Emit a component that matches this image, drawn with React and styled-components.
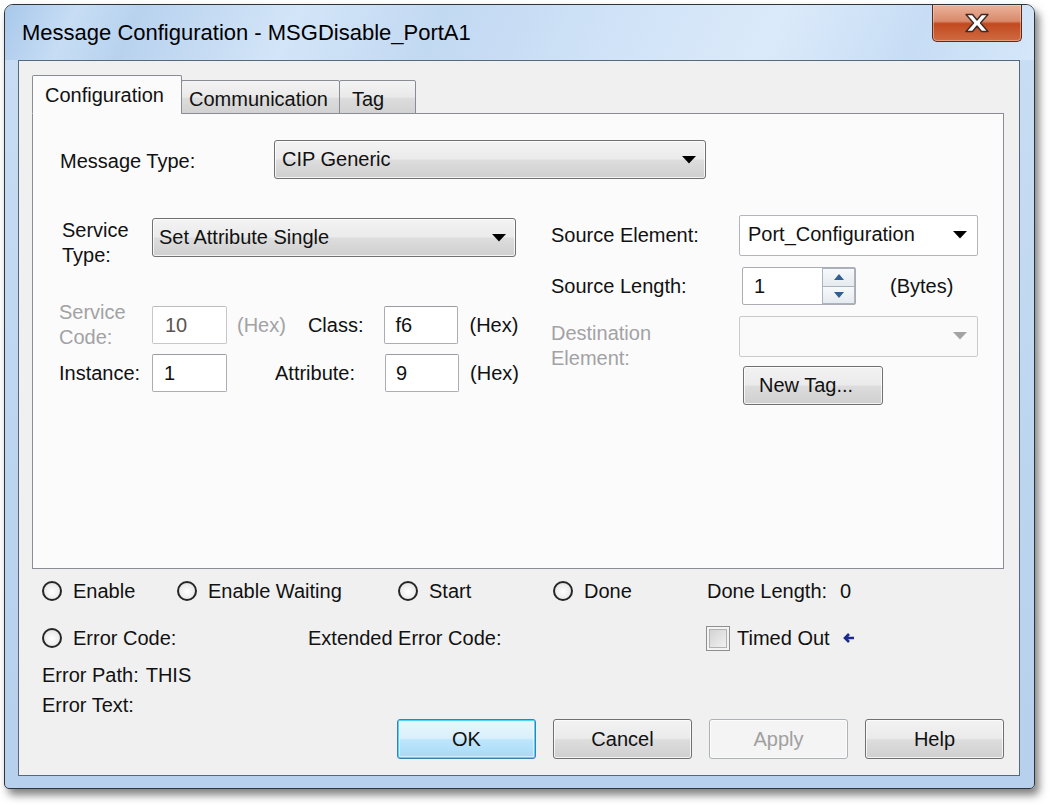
import React from "react";
import styled, { createGlobalStyle } from "styled-components";

const GlobalStyle = createGlobalStyle`
  html, body { margin: 0; padding: 0; background: #fff; }
  body {
    font-family: "Liberation Sans", Arial, sans-serif;
    font-size: 20px;
    color: #111;
  }
  * { box-sizing: border-box; }
`;

const Page = styled.div`
  width: 1050px;
  height: 805px;
  padding: 4px 0 0 4px;
  background: #fff;
  overflow: hidden;
`;

const Window = styled.div`
  width: 1031px;
  height: 785px;
  border: 1px solid #2f3438;
  border-radius: 9px 9px 5px 5px;
  background: linear-gradient(180deg, #c9def4 0%, #bcd5ef 60%, #b6d0ed 100%);
  box-shadow: 4px 6px 8px rgba(0, 0, 0, 0.5);
  display: flex;
  flex-direction: column;
  padding: 0 14px 12px 13px;
`;

const TitleBar = styled.div`
  height: 55px;
  flex-shrink: 0;
  display: flex;
  align-items: center;
  justify-content: space-between;
  margin: 0 -14px 0 -13px;
  padding: 0 13px 0 15px;
  border-radius: 8px 8px 0 0;
  background: linear-gradient(
    115deg,
    #a8c8ea 0%,
    #c7ddf5 7%,
    #b8d2ee 13%,
    #d3e5f8 28%,
    #c2d9f2 42%,
    #cfe2f7 58%,
    #dbeafa 74%,
    #c7ddf5 88%,
    #d5e7f9 100%
  );
`;

const Title = styled.div`
  font-size: 22px;
  line-height: 26px;
  color: #000;
  padding-left: 2px;
`;

const CloseButton = styled.div`
  align-self: flex-start;
  width: 90px;
  height: 37px;
  margin-right: -1px;
  border: 1px solid #5a2a1c;
  border-top: none;
  border-radius: 0 0 5px 5px;
  background: linear-gradient(180deg, #eab39c 0%, #d98a6b 45%, #c2491f 52%, #cf6b42 100%);
  box-shadow: inset 0 0 0 1px rgba(255, 220, 200, 0.45);
  display: flex;
  align-items: center;
  justify-content: center;
`;

const Client = styled.div`
  flex: 1;
  background: #f0f0f0;
  border: 1px solid #56687c;
  display: flex;
  flex-direction: column;
  padding: 14px 15px 16px 13px;
`;

const TabStrip = styled.div`
  display: flex;
  align-items: flex-end;
  height: 39px;
  margin-bottom: -1px;
  position: relative;
  z-index: 1;
`;

const Tab = styled.div`
  width: ${(p) => p.$w}px;
  height: ${(p) => (p.$active ? 39 : 34)}px;
  margin-left: ${(p) => (p.$first ? 0 : -1)}px;
  padding: ${(p) => (p.$active ? 7 : 6)}px 0 0 ${(p) => p.$pl}px;
  line-height: 24px;
  border: 1px solid #898c95;
  border-bottom-color: ${(p) => (p.$active ? "#fbfbfc" : "#898c95")};
  border-radius: 2px 2px 0 0;
  background: ${(p) =>
    p.$active
      ? "#fbfbfc"
      : "linear-gradient(180deg, #f4f4f4 0%, #e9e9e9 50%, #dcdcdc 55%, #d2d2d2 100%)"};
  color: #111;
  white-space: nowrap;
`;

const Panel = styled.div`
  height: 456px;
  flex-shrink: 0;
  border: 1px solid #898c95;
  background: #fbfbfc;
  padding: 26px 0 0 26px;
`;

const Row = styled.div`
  display: flex;
  align-items: ${(p) => p.$align || "center"};
  margin-top: ${(p) => p.$mt || 0}px;
  height: ${(p) => (p.$h ? `${p.$h}px` : "auto")};
`;

const Label = styled.div`
  width: ${(p) => (p.$w ? `${p.$w}px` : "auto")};
  flex-shrink: 0;
  padding-left: ${(p) => p.$pl || 0}px;
  margin-top: ${(p) => p.$mt || 0}px;
  margin-left: ${(p) => p.$ml || 0}px;
  grid-row: ${(p) => (p.$span ? `span ${p.$span}` : "auto")};
  align-self: ${(p) => (p.$span ? "start" : "auto")};
  line-height: 25px;
  color: ${(p) => (p.$dim ? "#a2a2a4" : "#111")};
  white-space: nowrap;
`;

const DropList = styled.div`
  width: ${(p) => p.$w}px;
  height: 39px;
  flex-shrink: 0;
  border: 1px solid #707070;
  border-radius: 3px;
  background: linear-gradient(180deg, #f3f3f3 0%, #ebebeb 48%, #dddddd 52%, #cfcfcf 100%);
  box-shadow: inset 0 0 0 1px rgba(255, 255, 255, 0.75);
  display: flex;
  align-items: center;
  justify-content: space-between;
  padding: 0 9px 0 ${(p) => p.$pl || 7}px;
  color: #111;
`;

const EditCombo = styled.div`
  width: 239px;
  height: 41px;
  border: 1px solid ${(p) => (p.$disabled ? "#c9cacc" : "#b3b5ba")};
  border-radius: 2px;
  background: ${(p) => (p.$disabled ? "#fafafa" : "#fff")};
  display: flex;
  align-items: center;
  justify-content: space-between;
  padding: 0 10px 2px 8px;
  color: #111;
`;

const TextBox = styled.div`
  width: ${(p) => p.$w || 75}px;
  height: 38px;
  flex-shrink: 0;
  margin-left: ${(p) => p.$ml || 0}px;
  border: 1px solid ${(p) => (p.$disabled ? "#c5c7ca" : "#abadb3")};
  border-top-color: ${(p) => (p.$disabled ? "#babcbf" : "#9a9ca2")};
  border-radius: 2px;
  background: #fff;
  display: flex;
  align-items: center;
  padding-left: ${(p) => p.$pl || 11}px;
  color: ${(p) => (p.$disabled ? "#5a5550" : "#111")};
`;

const Columns = styled.div`
  display: flex;
  margin-top: 36px;
`;

const LeftCol = styled.div`
  width: 492px;
  flex-shrink: 0;
`;

const RightCol = styled.div`
  display: grid;
  grid-template-columns: 188px 1fr;
  align-items: center;
`;

const Spin = styled.div`
  width: 114px;
  height: 38px;
  margin-left: 3px;
  border: 1px solid #abadb3;
  border-radius: 2px;
  background: #fff;
  display: flex;
  align-items: center;
  justify-content: space-between;
  padding-left: 11px;
`;

const SpinButtons = styled.div`
  width: 33px;
  height: 100%;
  display: flex;
  flex-direction: column;
`;

const SpinButton = styled.div`
  flex: 1;
  border: 1px solid #a9b4c0;
  border-top-width: ${(p) => (p.$down ? 0 : 1)}px;
  background: linear-gradient(180deg, #f7f9fb 0%, #e6ebf0 100%);
  display: flex;
  align-items: center;
  justify-content: center;
`;

const PushButton = styled.div`
  width: ${(p) => p.$w || 139}px;
  height: ${(p) => p.$h || 40}px;
  flex-shrink: 0;
  border: 1px solid
    ${(p) => (p.$default ? "#3c7fb1" : p.$disabled ? "#adb2b5" : "#707070")};
  border-radius: 3px;
  background: ${(p) =>
    p.$default
      ? "linear-gradient(180deg, #eaf6fd 0%, #d9f0fc 48%, #bee6fd 52%, #a7d9f5 100%)"
      : p.$disabled
      ? "#f4f4f4"
      : "linear-gradient(180deg, #f2f2f2 0%, #ebebeb 48%, #dddddd 52%, #cfcfcf 100%)"};
  box-shadow: ${(p) =>
    p.$default
      ? "inset 0 0 0 1px #48d8fb, inset 0 0 0 2px rgba(255,255,255,0.5)"
      : "inset 0 0 0 1px rgba(255,255,255,0.75)"};
  display: flex;
  align-items: center;
  justify-content: center;
  color: ${(p) => (p.$disabled ? "#a0a0a0" : "#111")};
`;

const NewTagButton = styled(PushButton)`
  margin-left: 4px;
  margin-top: 9px;
  justify-content: flex-start;
  padding-left: 15px;
`;

const StatusArea = styled.div`
  padding-left: 10px;
  display: flex;
  flex-direction: column;
`;

const StatusRow = styled.div`
  display: flex;
  align-items: center;
  height: 28px;
  margin-top: ${(p) => p.$mt}px;
`;

const StatusCell = styled.div`
  width: ${(p) => (p.$w ? `${p.$w}px` : "auto")};
  flex-shrink: 0;
  display: flex;
  align-items: center;
  gap: ${(p) => p.$gap ?? 11}px;
  white-space: nowrap;
`;

const Radio = styled.span`
  width: 20px;
  height: 20px;
  border-radius: 50%;
  border: 2px solid #262626;
  background: radial-gradient(circle at 50% 55%, #ffffff 0%, #ececec 60%, #cfcfcf 100%);
  flex-shrink: 0;
`;

const CheckBox = styled.span`
  width: 24px;
  height: 25px;
  border: 1px solid #8e8f8f;
  background: linear-gradient(135deg, #cdcdcd 0%, #f7f7f7 100%);
  box-shadow: inset 0 0 0 2px #f4f4f4, inset 0 0 0 3px #b2b2b2;
  flex-shrink: 0;
`;

const Pointer = styled.span`
  display: flex;
  margin-left: 5px;
`;

const ButtonRow = styled.div`
  display: flex;
  justify-content: flex-end;
  gap: 17px;
`;

const DownArrow = ({ color = "#000" }) => (
  <svg width="14" height="8" viewBox="0 0 14 8">
    <path d="M0 0 H14 L7 7.5 Z" fill={color} />
  </svg>
);

const SpinArrow = ({ up }) => (
  <svg width="10" height="6" viewBox="0 0 10 6">
    <path d={up ? "M0 6 L5 0 L10 6 Z" : "M0 0 L10 0 L5 6 Z"} fill="#2f5f93" />
  </svg>
);

const CloseGlyph = () => (
  <svg width="26" height="20" viewBox="0 0 26 20">
    <path
      d="M2 1.5 H8.5 L13 7 L17.5 1.5 H24 L16.5 10 L24 18.5 H17.5 L13 13 L8.5 18.5 H2 L9.5 10 Z"
      fill="#fff"
      stroke="#3d2a24"
      strokeWidth="1.4"
      strokeLinejoin="round"
    />
  </svg>
);

const BackArrow = () => (
  <svg width="13" height="12" viewBox="0 0 13 12">
    <path
      d="M12 6 H3.5 M7 2 L3 6 L7 10"
      fill="none"
      stroke="#1b2a8f"
      strokeWidth="2.6"
    />
  </svg>
);

const buttons = [
  { label: "OK", isDefault: true },
  { label: "Cancel" },
  { label: "Apply", disabled: true },
  { label: "Help" },
];

export default function App() {
  return (
    <Page>
      <GlobalStyle />
      <Window>
        <TitleBar>
          <Title>Message Configuration - MSGDisable_PortA1</Title>
          <CloseButton>
            <CloseGlyph />
          </CloseButton>
        </TitleBar>

        <Client>
          <TabStrip>
            <Tab $active $first $w={150} $pl={12}>Configuration</Tab>
            <Tab $w={159} $pl={7}>Communication</Tab>
            <Tab $w={77} $pl={12}>Tag</Tab>
          </TabStrip>

          <Panel>
            <Row $h={39}>
              <Label $w={215} $pl={1} $mt={3}>Message Type:</Label>
              <DropList $w={432}>
                <span>CIP Generic</span>
                <DownArrow />
              </DropList>
            </Row>

            <Columns>
              <LeftCol>
                <Row $align="flex-start" $mt={3}>
                  <Label $w={93} $pl={3}>
                    Service
                    <br />
                    Type:
                  </Label>
                  <DropList $w={364} $pl={6}>
                    <span>Set Attribute Single</span>
                    <DownArrow />
                  </DropList>
                </Row>

                <Row $mt={32}>
                  <Label $w={93} $dim>
                    Service
                    <br />
                    Code:
                  </Label>
                  <TextBox $disabled $pl={12}>10</TextBox>
                  <Label $ml={10} $dim>(Hex)</Label>
                  <Label $ml={22}>Class:</Label>
                  <TextBox $w={74} $ml={21} $pl={10}>f6</TextBox>
                  <Label $ml={11}>(Hex)</Label>
                </Row>

                <Row $mt={4}>
                  <Label $w={93}>Instance:</Label>
                  <TextBox>1</TextBox>
                  <Label $ml={48}>Attribute:</Label>
                  <TextBox $w={74} $ml={30} $pl={10}>9</TextBox>
                  <Label $ml={11}>(Hex)</Label>
                </Row>
              </LeftCol>

              <RightCol>
                <Label>Source Element:</Label>
                <EditCombo>
                  <span>Port_Configuration</span>
                  <DownArrow />
                </EditCombo>

                <Label $mt={11}>Source Length:</Label>
                <Row $mt={11}>
                  <Spin>
                    <span>1</span>
                    <SpinButtons>
                      <SpinButton>
                        <SpinArrow up />
                      </SpinButton>
                      <SpinButton $down>
                        <SpinArrow />
                      </SpinButton>
                    </SpinButtons>
                  </Spin>
                  <Label $ml={34}>(Bytes)</Label>
                </Row>

                <Label $dim $span={2} $mt={16}>
                  Destination
                  <br />
                  Element:
                </Label>
                <Row $mt={11}>
                  <EditCombo $disabled>
                    <span />
                    <DownArrow color="#a3a3a3" />
                  </EditCombo>
                </Row>
                <Row>
                  <NewTagButton $w={140} $h={39}>New Tag...</NewTagButton>
                </Row>
              </RightCol>
            </Columns>
          </Panel>

          <StatusArea>
            <StatusRow $mt={8}>
              <StatusCell $w={135}><Radio />Enable</StatusCell>
              <StatusCell $w={221}><Radio />Enable Waiting</StatusCell>
              <StatusCell $w={155}><Radio />Start</StatusCell>
              <StatusCell $w={154}><Radio />Done</StatusCell>
              <StatusCell $gap={13}>Done Length:<span>0</span></StatusCell>
            </StatusRow>

            <StatusRow $mt={19}>
              <StatusCell $w={266}><Radio />Error Code:</StatusCell>
              <StatusCell $w={398}>Extended Error Code:</StatusCell>
              <StatusCell $gap={7}>
                <CheckBox />
                Timed Out
                <Pointer>
                  <BackArrow />
                </Pointer>
              </StatusCell>
            </StatusRow>

            <StatusRow $mt={9}>
              <StatusCell $gap={7}>Error Path:<span>THIS</span></StatusCell>
            </StatusRow>

            <StatusRow $mt={2}>
              <StatusCell>Error Text:</StatusCell>
            </StatusRow>
          </StatusArea>

          <ButtonRow>
            {buttons.map((b) => (
              <PushButton key={b.label} $default={b.isDefault} $disabled={b.disabled}>
                {b.label}
              </PushButton>
            ))}
          </ButtonRow>
        </Client>
      </Window>
    </Page>
  );
}
